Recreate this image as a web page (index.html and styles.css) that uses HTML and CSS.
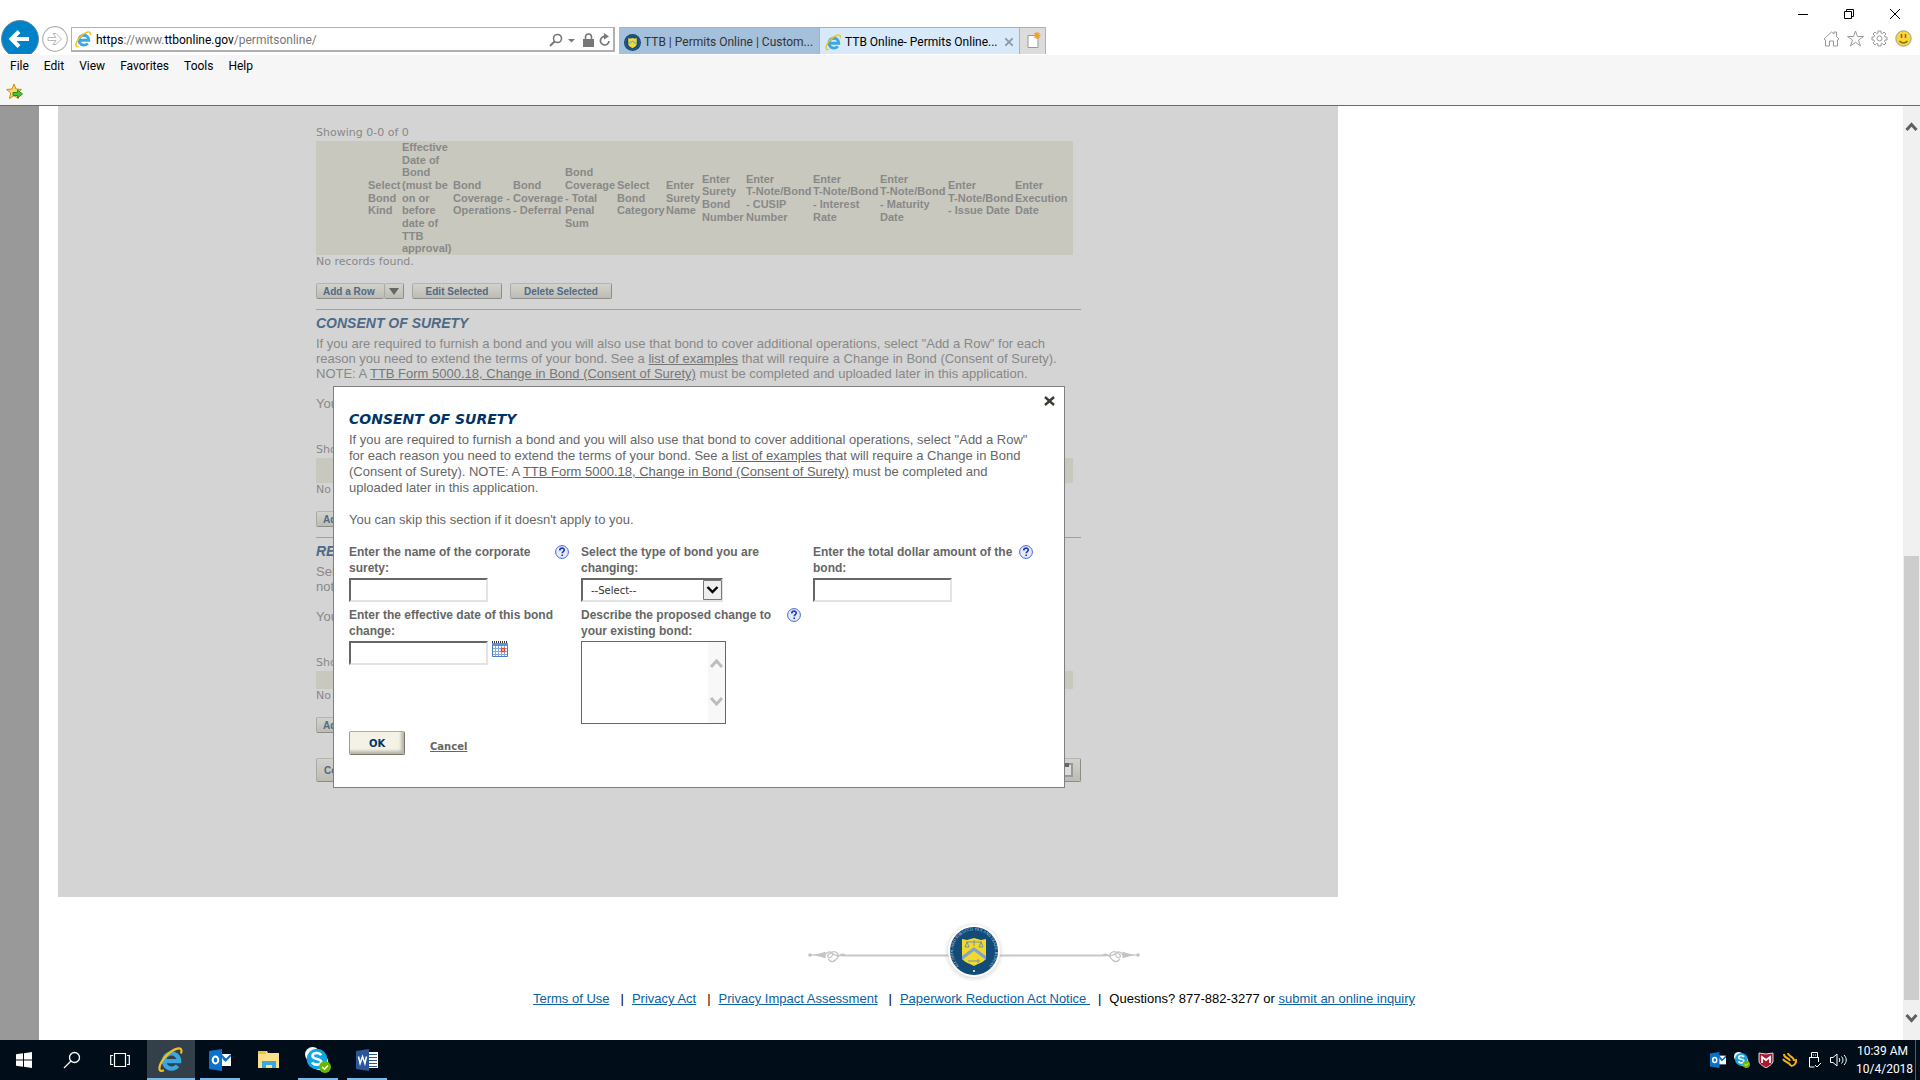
FILE: index.html
```html
<!DOCTYPE html>
<html lang="en">
<head>
    <meta charset="UTF-8">
    <meta name="viewport" content="width=device-width, initial-scale=1.0">
    <title>TTB Online- Permits Online</title>
    <link rel="stylesheet" href="styles.css">
</head>
<body>

    <!-- Shared icons -->
    <svg class="defs" width="0" height="0" aria-hidden="true">
        <symbol id="ie" viewBox="0 0 24 24">
            <path d="M6 13h13.500a7 7 0 1 0-1.500 4.300" fill="none" stroke="#3ba7e0" stroke-width="4"/>
            <path d="M5.500 21.500c-2.500 1.200-4.300.6-4.200-1.900C1.500 14 9.500 4 17 1.700c3.800-1.200 5.600.3 4.200 4.300" fill="none" stroke="#f4c020" stroke-width="2"/>
        </symbol>
        <symbol id="seal" viewBox="0 0 24 24">
            <circle cx="12" cy="12" r="12" fill="#124a78"/>
            <circle cx="12" cy="12" r="9.500" fill="none" stroke="#5f86a3" stroke-width="1" stroke-dasharray="1 1"/>
            <path d="M6 6l3 .5 3-1 3 1 3-.5v8c0 3-3 4-6 6-3-2-6-3-6-6z" fill="#f3d92c"/>
            <path d="M6 13l6-4 6 4v2l-6-4-6 4z" fill="#7fa6c8"/>
        </symbol>
        <symbol id="help" viewBox="0 0 14 14">
            <circle cx="7" cy="7" r="6.400" fill="#e6ebf8" stroke="#4466dd" stroke-width="1"/>
            <path d="M4.800 5.400c0-3 4.600-2.800 4.500-.3 0 1.500-2.100 1.500-2.100 3.200M7.200 9.500v1.500" fill="none" stroke="#2440b8" stroke-width="1.700"/>
        </symbol>
        <symbol id="outlook" viewBox="0 0 22 22">
            <path d="M12 5h10v12H12z" fill="#fff"/>
            <path d="M12 6l5 5 5-5M14 9l3 3" fill="none" stroke="#0a6cc4" stroke-width="2"/>
            <path d="M0 2l13-2v22L0 20z" fill="#0a72c8"/>
            <ellipse cx="6.500" cy="11" rx="2.800" ry="3.500" fill="none" stroke="#fff" stroke-width="2"/>
        </symbol>
        <symbol id="skype" viewBox="0 0 24 24">
            <circle cx="7" cy="7" r="7" fill="#f4fbff"/>
            <circle cx="14" cy="14" r="7.500" fill="#f4fbff"/>
            <circle cx="11" cy="11" r="9.500" fill="#12a5e6"/>
            <path d="M15 7.500C13 4.500 7 5 7 8.200c0 3.600 8 2 8 5.400 0 3.400-6.600 3.600-8.400.6" fill="none" stroke="#fff" stroke-width="2.400"/>
            <circle cx="18.500" cy="18.500" r="5.500" fill="#6bb700"/>
            <path d="M16 18.500l2 2 3.200-3.400" fill="none" stroke="#fff" stroke-width="1.300"/>
        </symbol>
    </svg>

    <header class="browser">
        <div class="window-buttons">
            <button type="button" aria-label="Minimize"><svg width="12" height="12"><path d="M1 6.500h10" stroke="#000"/></svg></button>
            <button type="button" aria-label="Restore"><svg width="12" height="12"><path d="M1.500 3.500h7v7h-7zM3.500 3.500v-2h7v7h-2" fill="none" stroke="#000"/></svg></button>
            <button type="button" aria-label="Close"><svg width="12" height="12"><path d="M1 1l10 10M11 1L1 11" stroke="#000"/></svg></button>
        </div>

        <div class="nav-row">
            <button type="button" class="back" aria-label="Back">
                <svg width="38" height="34"><circle cx="19" cy="19" r="18.500" fill="#0082c8" stroke="#6e8797"/><path d="M28 19H12M18 11.500L10.500 19l7.500 7.500" fill="none" stroke="#fff" stroke-width="4"/></svg>
            </button>
            <button type="button" class="forward" aria-label="Forward">
                <svg width="26" height="26"><circle cx="13" cy="13" r="12.300" fill="#fff" stroke="#b4b4b4" stroke-width="1.200"/><path d="M6 11.500h8l-3-4h3l5.500 5.500-5.500 5.500h-3l3-4H6z" fill="none" stroke="#b8b8b8"/></svg>
            </button>
            <div class="address">
                <svg width="17" height="17"><use href="#ie"/></svg>
                <span class="url"><b>https</b>://www.<b>ttbonline.gov</b>/permitsonline/</span>
                <svg width="62" height="14" fill="none" stroke="#777">
                    <circle cx="8.500" cy="5.500" r="4" stroke-width="1.600"/><path d="M5.500 8.500L1 13" stroke-width="2"/>
                    <path d="M19 6h7l-3.500 3.500z" fill="#777" stroke="none"/>
                    <path d="M34 6h11v8H34z" fill="#777" stroke="none"/><path d="M36.500 6V4a3 3 0 0 1 6 0v2" stroke-width="1.600"/>
                    <path d="M60 8a4.300 4.300 0 1 1-3-4.400" stroke-width="1.700"/><path d="M55 0l5 3.500-5 3z" fill="#777" stroke="none"/>
                </svg>
            </div>
            <nav class="tabs">
                <a class="tab" href="#"><svg width="17" height="17"><use href="#seal"/></svg><span>TTB | Permits Online | Custom...</span></a>
                <a class="tab active" href="#"><svg width="17" height="17"><use href="#ie"/></svg><span>TTB Online- Permits Online...</span>
                    <svg class="tab-close" width="8" height="8"><path d="M0 0l8 8M8 0L0 8" stroke="#8b99a6" stroke-width="1.800"/></svg></a>
                <button type="button" class="new-tab" aria-label="New tab"><svg width="16" height="18"><path d="M2 3.500h10v12H2z" fill="#fff" stroke="#999"/><path d="M11 0v7M7.500 3.500h7M8.500 1l5 5M13.500 1l-5 5" stroke="#f0a020" stroke-width="1.400"/></svg></button>
            </nav>
            <div class="tools">
                <button type="button" aria-label="Home"><svg width="17" height="17"><path d="M1 9l7.500-7L11 4V2h2.500v4.500L16 9l-1.500 1v6h-4v-5h-4v5h-4v-6z"/></svg></button>
                <button type="button" aria-label="Favorites"><svg width="17" height="17"><path d="M8.500 1l2 5.500h6l-5 3.500 2 6-5-3.700-5 3.700 2-6-5-3.500h6z"/></svg></button>
                <button type="button" aria-label="Settings"><svg width="17" height="17"><path d="M7 1h3v2l1.500.6L13 2l2 2-1.500 1.500L14 7h2v3h-2l-.5 1.500L15 13l-2 2-1.500-1.500L10 14v2H7v-2l-1.500-.5L4 15l-2-2 1.500-1.500L3 10H1V7h2l.5-1.500L2 4l2-2 1.500 1.500L7 3z"/><circle cx="8.500" cy="8.500" r="2.500"/></svg></button>
                <button type="button" class="smile" aria-label="Feedback"><svg width="17" height="17"><circle cx="8.500" cy="8.500" r="7.700"/><path d="M6.500 4v4M10.500 4v4M4.500 11c2 2.500 6 2.500 8 0" stroke="#7c6a18" stroke-width="1.500"/></svg></button>
            </div>
        </div>

        <div class="menu">
            <a href="#">File</a><a href="#">Edit</a><a href="#">View</a><a href="#">Favorites</a><a href="#">Tools</a><a href="#">Help</a>
        </div>
        <div class="favorites">
            <svg width="17" height="17"><path d="M8 1l2 5 5.500.500-4.200 3.500 1.200 5.500L8 12.700 3.500 15.500 4.700 10 .7 6.500 6 6z" fill="#fbd764" stroke="#c98a1c"/><path d="M7 9.500h4.500V7l5 4-5 4v-2.500H7z" fill="#46c63c" stroke="#2a8a26"/></svg>
        </div>
    </header>

    <div class="viewport">
        <div class="gutter"></div>
        <div class="page">
            <main class="panel">
                <div class="content">
                    <p class="count">Showing 0-0 of 0</p>
                    <table class="records">
                        <colgroup>
                            <col class="w52"><col class="w34"><col class="w51"><col class="w60"><col class="w52"><col class="w52"><col class="w49"><col class="w36"><col class="w44"><col class="w67"><col class="w67"><col class="w68"><col class="w67"><col>
                        </colgroup>
                        <tr>
                            <td></td>
                            <th>Select<br>Bond<br>Kind</th>
                            <th>Effective<br>Date of<br>Bond<br>(must be<br>on or<br>before<br>date of<br>TTB<br>approval)</th>
                            <th>Bond<br>Coverage -<br>Operations</th>
                            <th>Bond<br>Coverage<br>- Deferral</th>
                            <th>Bond<br>Coverage<br>- Total<br>Penal<br>Sum</th>
                            <th>Select<br>Bond<br>Category</th>
                            <th>Enter<br>Surety<br>Name</th>
                            <th>Enter<br>Surety<br>Bond<br>Number</th>
                            <th>Enter<br>T-Note/Bond<br>- CUSIP<br>Number</th>
                            <th>Enter<br>T-Note/Bond<br>- Interest<br>Rate</th>
                            <th>Enter<br>T-Note/Bond<br>- Maturity<br>Date</th>
                            <th>Enter<br>T-Note/Bond<br>- Issue Date</th>
                            <th>Enter<br>Execution<br>Date</th>
                        </tr>
                    </table>
                    <p class="none">No records found.</p>
                    <div class="row-buttons">
                        <div class="split">
                            <button type="button" class="small add">Add a Row</button><button type="button" class="small drop" aria-label="More"><svg width="10" height="7"><path d="M0 0h10L5 7z" fill="#666"/></svg></button>
                        </div>
                        <button type="button" class="small edit">Edit Selected</button>
                        <button type="button" class="small delete">Delete Selected</button>
                    </div>

                    <section>
                        <h2>CONSENT OF SURETY</h2>
                        <p>If you are required to furnish a bond and you will also use that bond to cover additional operations, select "Add a Row" for each<br>reason you need to extend the terms of your bond. See a <a href="#">list of examples</a> that will require a Change in Bond (Consent of Surety).<br>NOTE: A <a href="#">TTB Form 5000.18, Change in Bond (Consent of Surety)</a> must be completed and uploaded later in this application.</p>
                        <p class="skip">You</p>
                        <p class="count">Sho</p>
                        <div class="strip"></div>
                        <p class="none">No</p>
                        <div class="row-buttons"><button type="button" class="small add">Add</button></div>
                    </section>

                    <section>
                        <h2>RE</h2>
                        <p>Sel<br>not</p>
                        <p class="skip">You</p>
                        <p class="count">Sho</p>
                        <div class="strip short"></div>
                        <p class="none">No</p>
                        <div class="row-buttons"><button type="button" class="small add">Add</button></div>
                    </section>

                    <div class="actions">
                        <button type="button" class="big">Co</button>
                        <button type="button" class="big save" aria-label="Save"><svg width="16" height="14"><path d="M1 1h14v12H1z" fill="#dcdcdc" stroke="#999" stroke-width="2"/><path d="M2 0h10v4H2z" fill="#666"/></svg></button>
                    </div>
                </div>

                <form class="dialog">
                    <button type="button" class="close" aria-label="Close"><svg width="11" height="10"><path d="M1 1l9 8M10 1L1 9" stroke="#3c3c34" stroke-width="2.400"/></svg></button>
                    <h1>CONSENT OF SURETY</h1>
                    <p>If you are required to furnish a bond and you will also use that bond to cover additional operations, select "Add a Row"<br>for each reason you need to extend the terms of your bond. See a <a href="#">list of examples</a> that will require a Change in Bond<br>(Consent of Surety). NOTE: A <a href="#">TTB Form 5000.18, Change in Bond (Consent of Surety)</a> must be completed and<br>uploaded later in this application.</p>
                    <p>You can skip this section if it doesn't apply to you.</p>

                    <div class="fields">
                        <div class="field">
                            <div class="label-row"><label for="surety">Enter the name of the corporate<br>surety:</label><svg class="help" width="14" height="14"><use href="#help"/></svg></div>
                            <input type="text" id="surety">
                        </div>
                        <div class="field">
                            <div class="label-row"><label for="bondType">Select the type of bond you are<br>changing:</label></div>
                            <div class="select-box">
                                <select id="bondType"><option>--Select--</option></select>
                                <svg class="arrow" width="19" height="20"><path d="M.500.500h18v19H.500z" fill="#eee" stroke="#777"/><path d="M4.500 7l5 5 5-5" fill="none" stroke="#000" stroke-width="2.400"/></svg>
                            </div>
                        </div>
                        <div class="field">
                            <div class="label-row"><label for="amount">Enter the total dollar amount of the<br>bond:</label><svg class="help" width="14" height="14"><use href="#help"/></svg></div>
                            <input type="text" id="amount">
                        </div>
                        <div class="field">
                            <div class="label-row"><label for="effective">Enter the effective date of this bond<br>change:</label></div>
                            <div class="date-box">
                                <input type="text" id="effective">
                                <svg width="16" height="16"><path d="M.500 2.500h15v13H.500z" fill="#fff" stroke="#4a7ac0"/><path d="M0 2h16v3H0z" fill="#5a8ee8"/><path d="M0 1h16" stroke="#333" stroke-width="2" stroke-dasharray="1 1"/><path d="M3.500 5v10M6.500 5v10M9.500 5v10M12.500 5v10M1 7.500h14M1 10.500h14M1 13.500h14" stroke="#86a8dc"/><path d="M9.500 7.500h3v3h-3z" fill="#fff" stroke="#e04a28" stroke-width="1.500"/></svg>
                            </div>
                        </div>
                        <div class="field">
                            <div class="label-row"><label for="change">Describe the proposed change to<br>your existing bond:</label><svg class="help" width="14" height="14"><use href="#help"/></svg></div>
                            <div class="area-box">
                                <textarea id="change"></textarea>
                                <svg class="scroll" width="17" height="81"><path d="M0 0h17v81H0z" fill="#f8f8f8"/><path d="M3 25l5.500-6 5.500 6M3 56l5.500 6 5.500-6" fill="none" stroke="#bdbdbd" stroke-width="3"/></svg>
                            </div>
                        </div>
                    </div>

                    <div class="dialog-buttons">
                        <button type="submit" class="ok">OK</button>
                        <a href="#" class="cancel">Cancel</a>
                    </div>
                </form>
            </main>

            <footer>
                <svg class="ornament" width="332" height="64" viewBox="0 0 332 64">
                    <defs>
                        <radialGradient id="glow"><stop offset=".7" stop-color="#999" stop-opacity=".5"/><stop offset="1" stop-color="#999" stop-opacity="0"/></radialGradient>
                        <path id="ring" d="M152.500 48.500a21 21 0 1 1 27 0"/>
                    </defs>
                    <path d="M34 36.500h264" stroke="#c8c8c8" stroke-width="2"/>
                    <g id="flourish" fill="none" stroke="#c4c4c4" stroke-width="1.200">
                        <circle cx="2" cy="36" r="1.200" fill="#c4c4c4"/>
                        <path d="M2 36h14"/><path d="M8 36l9-2.500v5z" fill="#c4c4c4"/>
                        <path d="M17 36c4-6 9-2 7 1s-6 1-4-1 6-5 9-2 0 7-4 8M20 40c6 7 9-2 12-4s5 0 5 0M22 33c6 5 9 4 14 3"/>
                    </g>
                    <use href="#flourish" transform="matrix(-1 0 0 1 332 0)"/>
                    <circle cx="166" cy="33" r="30" fill="url(#glow)"/>
                    <circle cx="166" cy="32" r="26" fill="#fff"/>
                    <circle cx="166" cy="32" r="24" fill="#124a78"/>
                    <text class="ring-text"><textPath href="#ring" startOffset="50%" text-anchor="middle">ALCOHOL AND TOBACCO TAX AND TRADE BUREAU</textPath></text>
                    <circle cx="166" cy="52" r="1" fill="#fff"/>
                    <path d="M154 20l5 1 7-2 7 2 5-1v18c0 5-7 6-12 9-5-3-12-4-12-9z" fill="#f3d92c"/>
                    <path d="M154 37l12-9 12 9v4l-12-9-12 9z" fill="#7fa6c8"/>
                    <path d="M158 23h16M166 21v6M159 23l-2 5h4zM173 23l-2 5h4zM160 42h12M170 40v4" fill="none" stroke="#6f94b0"/>
                </svg>
                <p class="links"><a href="#">Terms of Use</a><span>|</span><a href="#">Privacy Act</a><span>|</span><a href="#">Privacy Impact Assessment</a><span>|</span><a href="#">Paperwork Reduction Act Notice&nbsp;</a><span class="tight">|</span>Questions? 877-882-3277 or&nbsp;<a href="#">submit an online inquiry</a></p>
            </footer>
        </div>
        <div class="scrollbar">
            <svg width="17" height="34"><path d="M3.500 24l5-5.500 5 5.500" fill="none" stroke="#606060" stroke-width="3"/></svg>
            <div class="thumb"></div>
            <svg width="17" height="40"><path d="M3.500 15l5 5.500 5-5.500" fill="none" stroke="#606060" stroke-width="3"/></svg>
        </div>
    </div>

    <div class="taskbar">
        <div class="apps">
            <button type="button" aria-label="Start"><svg width="16" height="16" fill="#fff"><path d="M0 2.300l7-1v6.200H0zM8 1.200L16 0v7.500H8zM0 8.500h7v6.200l-7-1zM8 8.500h8V16l-8-1.200z"/></svg></button>
            <button type="button" aria-label="Search"><svg width="18" height="18" fill="none" stroke="#fff" stroke-width="1.300"><circle cx="11.500" cy="6.500" r="5"/><path d="M8 10l-7 7"/></svg></button>
            <button type="button" aria-label="Task View"><svg width="20" height="16" fill="none" stroke="#fff" stroke-width="1.200"><path d="M4.500 1.500h11v13h-11zM3 3.500H.7v9H3M17 3.500h2.300v9H17"/></svg></button>
            <button type="button" class="open current" aria-label="Internet Explorer"><svg width="26" height="26"><use href="#ie"/></svg></button>
            <button type="button" class="open" aria-label="Outlook"><svg width="22" height="22"><use href="#outlook"/></svg></button>
            <button type="button" class="app" aria-label="File Explorer"><svg width="22" height="18"><path d="M0 0h9l1 2h11v15H0z" fill="#fbe08c"/><path d="M0 0h8v3H0z" fill="#f0c040"/><path d="M4 17v-7h14v7h-4v-3H8v3z" fill="#3aa8dc"/></svg></button>
            <button type="button" class="open" aria-label="Skype"><svg width="26" height="26"><use href="#skype"/></svg></button>
            <button type="button" class="open" aria-label="Word"><svg width="22" height="22"><path d="M12 3h10v16H12z" fill="#fff"/><path d="M13 5.500h8M13 8.500h8M13 11.500h8M13 14.500h8M13 17.500h8" stroke="#2b579a"/><path d="M0 2l13-2v22L0 20z" fill="#2b579a"/><path d="M2.500 7.500l1.600 7 2.400-7 2.400 7 1.600-7" fill="none" stroke="#fff" stroke-width="1.500"/></svg></button>
        </div>
        <div class="tray">
            <svg width="16" height="16"><use href="#outlook"/></svg>
            <svg width="16" height="16"><use href="#skype"/></svg>
            <svg width="16" height="16"><path d="M1 1l7 1 7-1v8c0 3-4 5-7 7-3-2-7-4-7-7z" fill="#b01830" stroke="#ddd"/><path d="M4 11V5l4 3 4-3v6" fill="none" stroke="#fff" stroke-width="1.800"/></svg>
            <svg width="16" height="16"><path d="M2 2c0 5 5 3 6 7M6 1c0 4 6 3 6 8M1 7c2 4 6 2 8 7M14 7c1 4-2 7-5 7" fill="none" stroke="#f4b010" stroke-width="2"/></svg>
            <svg width="16" height="16" fill="none" stroke="#fff"><path d="M5.500 5V.500h6V5M3.500 5.500h9M3.500 5v10h5M12.500 5v5M7 3h1M9 3h1M9 13l2 2 4-4"/></svg>
            <svg width="18" height="16" fill="none" stroke="#fff"><path d="M.500 5.500h2.500l4-3.500v12l-4-3.500H.500zM9 6c1 1 1 3 0 4M11.500 4.500c2 2 2 5 0 7M14 3c3 3 3 7 0 10"/></svg>
            <div class="clock">10:39 AM<br>10/4/2018</div>
        </div>
    </div>

</body>
</html>
```
FILE: styles.css
```css
* {
    box-sizing: border-box;
}
body {
    margin: 0;
    min-height: 100vh;
    display: flex;
    flex-direction: column;
    background-color: #fff;
    font-family: "Liberation Sans", Arial, sans-serif;
    font-size: 13px;
}
button {
    padding: 0;
    border: none;
    background: none;
    font-family: inherit;
}
p, h1, h2 {
    margin: 0;
}
svg {
    flex: none;
    display: block;
}
.defs {
    position: absolute;
}

/* Browser window */
.browser {
    background-color: #f6f6f6;
    border-bottom: 1px solid #6b6b6b;
    font-family: Roboto, "Open Sans", sans-serif;
    font-size: 12px;
}
.window-buttons {
    display: flex;
    justify-content: flex-end;
    gap: 34px;
    height: 20px;
    padding: 8px 19px 0 0;
    background-color: #fff;
}
.nav-row {
    display: flex;
    height: 35px;
    padding-left: 1px;
    background-color: #fff;
}
.forward {
    align-self: flex-start;
    margin: 6px 3px 0;
}
.back {
    align-self: flex-start;
}
.address {
    display: flex;
    align-items: center;
    width: 544px;
    height: 25px;
    margin-top: 7px;
    padding: 1px 2px 0 3px;
    border: 1px solid #b0b0b0;
    border-width: 1px 2px 2px 1px;
}
.url {
    flex: 1;
    padding-left: 4px;
    color: #777;
}
.url b {
    color: #000;
    font-weight: normal;
}
.tabs {
    display: flex;
    height: 27px;
    margin: 7px 0 0 4px;
    border-top: 1px solid #b0b0b0;
}
.tab {
    display: flex;
    align-items: center;
    gap: 3px;
    width: 201px;
    padding: 2px 6px 0 5px;
    border-right: 1px solid #b0b0b0;
    background-color: #a4c0da;
    color: #333;
    text-decoration: none;
    white-space: nowrap;
}
.tab.active {
    width: 200px;
    background-color: #d8eafa;
    color: #000;
}
.tab-close {
    margin-left: auto;
}
.new-tab {
    width: 26px;
    padding-left: 6px;
    border-right: 1px solid #b0b0b0;
    background-color: #dcdcdc;
}
.tools {
    display: flex;
    gap: 7px;
    margin-left: auto;
    padding: 10px 8px 0 0;
}
.tools button {
    align-self: flex-start;
}
.tools svg {
    fill: none;
    stroke: #999;
}
.smile circle {
    fill: #fbd53a;
}
.menu {
    display: flex;
    gap: 15px;
    padding-left: 10px;
    line-height: 22px;
}
.menu a {
    color: #000;
    text-decoration: none;
}
.favorites {
    padding: 6px 6px 5px;
}

/* Page area */
.viewport {
    flex: 1;
    display: flex;
}
.gutter {
    width: 39px;
    background-color: #999;
}
.page {
    flex: 1;
}
.panel {
    position: relative;
    max-width: 1280px;
    margin-left: 19px;
    padding: 18px 0 115px 258px;
    background-color: #d4d4d4;
    color: #888;
}
.content {
    width: 765px;
    line-height: 15px;
    white-space: nowrap;
}
.count, .none {
    font-family: "DejaVu Sans", Verdana, sans-serif;
    font-size: 11px;
}
.count {
    line-height: 17px;
}
.none {
    line-height: 14px;
}
.records {
    width: 757px;
    height: 114px;
    table-layout: fixed;
    border-collapse: collapse;
    background-color: #c9c8bf;
    font-size: 11px;
    line-height: 1.15;
}
.records th, .records td {
    padding: 0;
    text-align: left;
}
.w34 { width: 34px; }
.w36 { width: 36px; }
.w44 { width: 44px; }
.w49 { width: 49px; }
.w51 { width: 51px; }
.w52 { width: 52px; }
.w60 { width: 60px; }
.w67 { width: 67px; }
.w68 { width: 68px; }
.strip {
    width: 757px;
    height: 25px;
    background-color: #c9c8bf;
}
.strip.short {
    height: 18px;
}
.row-buttons {
    display: flex;
    gap: 8px;
    margin: 14px 0 10px;
}
.split {
    display: flex;
}
.small, .big {
    height: 16px;
    border: 1px solid;
    border-color: #b4b4b0 #8c8c88 #8c8c88 #a8a8a4;
    border-radius: 2px;
    background: linear-gradient(#d2d1cb, #bdbcb4);
    color: #4f6a86;
    font-size: 10px;
    font-weight: bold;
}
.add {
    width: 68px;
    padding-left: 6px;
    text-align: left;
}
.split .add {
    border-right: none;
}
.drop {
    width: 20px;
    padding-left: 4px;
}
.edit {
    width: 90px;
}
.delete {
    width: 102px;
}
section {
    border-top: 1px solid #a0a0a0;
    padding-top: 5px;
}
h2 {
    margin-bottom: 5px;
    color: #4f6a86;
    font-size: 14px;
    font-style: italic;
    line-height: 16px;
}
.content a {
    color: #777;
}
.skip {
    margin: 15px 0 30px;
}
.actions {
    display: flex;
    justify-content: space-between;
    padding-top: 15px;
}
.big {
    width: 90px;
    height: 24px;
    padding: 0 7px;
    font-size: 10px;
    text-align: left;
}
.big.save {
    display: flex;
    align-items: center;
    justify-content: flex-end;
    width: 40px;
}

/* Dialog over the page */
.dialog {
    position: absolute;
    left: 275px;
    top: 280px;
    width: 732px;
    padding: 24px 15px 32px;
    border: 1px solid #808080;
    background-color: #fff;
    color: #666;
    line-height: 16px;
    white-space: nowrap;
}
.close {
    position: absolute;
    top: 9px;
    right: 9px;
}
.dialog h1 {
    margin-bottom: 4px;
    color: #036;
    font-family: "DejaVu Sans", Verdana, sans-serif;
    font-size: 14px;
    font-style: italic;
    line-height: 17px;
}
.dialog p {
    margin-bottom: 16px;
}
.dialog a {
    color: #666;
}
.fields {
    display: grid;
    grid-template-columns: repeat(3, 232px);
    row-gap: 5px;
}
.label-row {
    display: flex;
    justify-content: space-between;
    width: 220px;
    margin-bottom: 2px;
    font-size: 12px;
    font-weight: bold;
}
.help {
    margin-top: 1px;
}
.field input, .field select {
    display: block;
    width: 139px;
    height: 24px;
    padding: 0 8px;
    border: 2px solid;
    border-color: #666 #e3e3e3 #e3e3e3 #666;
    border-radius: 0;
    background-color: #fff;
    color: #333;
    font-family: "DejaVu Sans", Verdana, sans-serif;
    font-size: 10px;
}
.field select {
    width: 142px;
    appearance: none;
}
.select-box, .area-box {
    position: relative;
    width: 142px;
}
.arrow {
    position: absolute;
    top: 2px;
    right: 1px;
}
.date-box {
    display: flex;
    gap: 4px;
}
.area-box {
    width: 145px;
}
textarea {
    display: block;
    width: 145px;
    height: 83px;
    border: 1px solid #666;
    resize: none;
}
.scroll {
    position: absolute;
    top: 1px;
    right: 1px;
}
.dialog-buttons {
    display: flex;
    align-items: flex-end;
    gap: 25px;
    margin-top: 7px;
    font-family: "DejaVu Sans", Verdana, sans-serif;
    font-size: 10px;
    font-weight: bold;
}
.ok {
    width: 56px;
    height: 24px;
    border: 1px solid;
    border-color: #b0aea4 #77756c #77756c #a09e94;
    border-radius: 2px;
    background: #f4f2e6;
    box-shadow: inset -3px -3px 3px #b9b7aa;
    color: #036;
    font-size: 10px;
    font-weight: bold;
}

/* Page footer */
footer {
    display: flex;
    flex-direction: column;
    align-items: center;
    padding: 22px 0 33px 6px;
}
.ornament {
    margin-bottom: 8px;
}
.ring-text {
    fill: #c5d3df;
    font-family: "Liberation Serif", serif;
    font-size: 4px;
}
.links {
    color: #000;
    line-height: 16px;
    white-space: nowrap;
}
.links a {
    color: #0a629f;
}
.links span {
    padding: 0 8px 0 11px;
}
.links .tight {
    padding: 0 8px;
}
.scrollbar {
    display: flex;
    flex-direction: column;
    width: 17px;
    background-color: #f0f0f0;
}
.thumb {
    flex: 1;
    margin: 416px 1px 0;
    background-color: #cdcdcd;
}

/* Taskbar */
.taskbar {
    display: flex;
    justify-content: space-between;
    height: 40px;
    background-color: #010e19;
    color: #fff;
}
.apps {
    display: flex;
    gap: 9px;
    padding-left: 4px;
}
.apps button {
    display: flex;
    align-items: center;
    justify-content: center;
    width: 39px;
    border-bottom: 2px solid transparent;
    border-top: 2px solid transparent;
}
.apps .app, .apps .open {
    width: 40px;
}
.apps .open {
    border-bottom-color: #76b9ed;
}
.apps .current {
    width: 48px;
    margin: 0 -4px 0 -1px;
    background-color: #333f49;
    border-top-color: #333f49;
}
.tray {
    display: flex;
    align-items: center;
    gap: 8px;
    padding-right: 4px;
}
.clock {
    width: 60px;
    padding: 2px 6px 2px 0;
    border-right: 1px solid #555d66;
    font-family: Roboto, "Open Sans", sans-serif;
    font-size: 12px;
    line-height: 18px;
    text-align: center;
    white-space: nowrap;
}
```
